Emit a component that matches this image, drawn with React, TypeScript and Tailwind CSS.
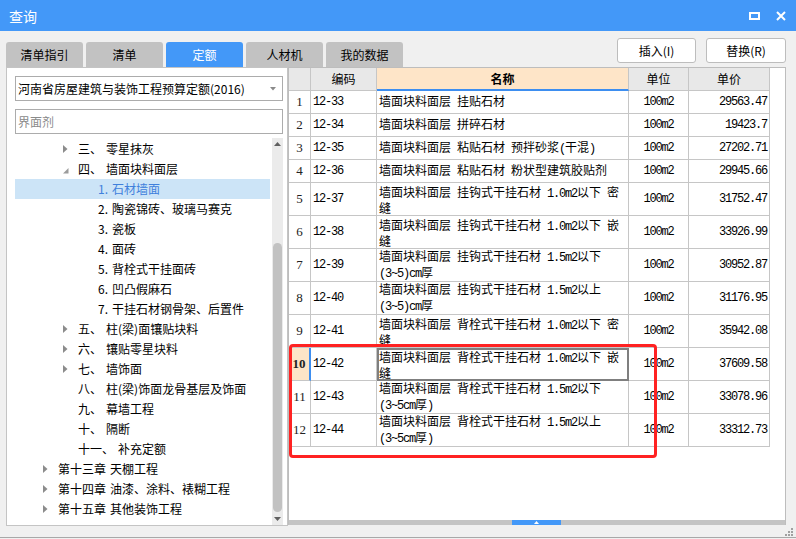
import React from "react";

const ui = "font-['Noto_Sans_CJK_SC','Noto_Sans',sans-serif]";
const mono = "font-['Liberation_Mono','Noto_Sans_CJK_SC',monospace]";
const serif = "font-['Liberation_Serif','Noto_Sans_CJK_SC',serif]";

function Mixed({ text }: { text: string }) {
  const parts = text.split(/([ -~]+)/).filter((p) => p.length > 0);
  return (
    <>
      {parts.map((p, i) =>
        /^[ -~]+$/.test(p) ? (
          <span key={i} className={`${mono} tracking-[-1.2px] whitespace-pre`}>
            {p}
          </span>
        ) : (
          <span key={i}>{p}</span>
        )
      )}
    </>
  );
}

type Row = { n: number; code: string; name: string[]; unit: string; price: string };

const rows: Row[] = [
  { n: 1, code: "12-33", name: ["墙面块料面层 挂贴石材"], unit: "100m2", price: "29563.47" },
  { n: 2, code: "12-34", name: ["墙面块料面层 拼碎石材"], unit: "100m2", price: "19423.7" },
  { n: 3, code: "12-35", name: ["墙面块料面层 粘贴石材 预拌砂浆(干混)"], unit: "100m2", price: "27202.71" },
  { n: 4, code: "12-36", name: ["墙面块料面层 粘贴石材 粉状型建筑胶贴剂"], unit: "100m2", price: "29945.66" },
  { n: 5, code: "12-37", name: ["墙面块料面层 挂钩式干挂石材 1.0m2以下 密", "缝"], unit: "100m2", price: "31752.47" },
  { n: 6, code: "12-38", name: ["墙面块料面层 挂钩式干挂石材 1.0m2以下 嵌", "缝"], unit: "100m2", price: "33926.99" },
  { n: 7, code: "12-39", name: ["墙面块料面层 挂钩式干挂石材 1.5m2以下", "(3~5)cm厚"], unit: "100m2", price: "30952.87" },
  { n: 8, code: "12-40", name: ["墙面块料面层 挂钩式干挂石材 1.5m2以上", "(3~5)cm厚"], unit: "100m2", price: "31176.95" },
  { n: 9, code: "12-41", name: ["墙面块料面层 背栓式干挂石材 1.0m2以下 密", "缝"], unit: "100m2", price: "35942.08" },
  { n: 10, code: "12-42", name: ["墙面块料面层 背栓式干挂石材 1.0m2以下 嵌", "缝"], unit: "100m2", price: "37609.58" },
  { n: 11, code: "12-43", name: ["墙面块料面层 背栓式干挂石材 1.5m2以下", "(3~5cm厚)"], unit: "100m2", price: "33078.96" },
  { n: 12, code: "12-44", name: ["墙面块料面层 背栓式干挂石材 1.5m2以上", "(3~5cm厚)"], unit: "100m2", price: "33312.73" },
];

type TreeItem = { lv: 1 | 2 | 3; a: string; b: string; ic?: "r" | "d"; sel?: boolean };

const tree: TreeItem[] = [
  { lv: 2, a: "三、", b: "零星抹灰", ic: "r" },
  { lv: 2, a: "四、", b: "墙面块料面层", ic: "d" },
  { lv: 3, a: "1.", b: "石材墙面", sel: true },
  { lv: 3, a: "2.", b: "陶瓷锦砖、玻璃马赛克" },
  { lv: 3, a: "3.", b: "瓷板" },
  { lv: 3, a: "4.", b: "面砖" },
  { lv: 3, a: "5.", b: "背栓式干挂面砖" },
  { lv: 3, a: "6.", b: "凹凸假麻石" },
  { lv: 3, a: "7.", b: "干挂石材钢骨架、后置件" },
  { lv: 2, a: "五、", b: "柱(梁)面镶贴块料", ic: "r" },
  { lv: 2, a: "六、", b: "镶贴零星块料", ic: "r" },
  { lv: 2, a: "七、", b: "墙饰面", ic: "r" },
  { lv: 2, a: "八、", b: "柱(梁)饰面龙骨基层及饰面" },
  { lv: 2, a: "九、", b: "幕墙工程" },
  { lv: 2, a: "十、", b: "隔断" },
  { lv: 2, a: "十一、", b: "补充定额" },
  { lv: 1, a: "第十三章", b: "天棚工程", ic: "r" },
  { lv: 1, a: "第十四章", b: "油漆、涂料、裱糊工程", ic: "r" },
  { lv: 1, a: "第十五章", b: "其他装饰工程", ic: "r" },
];

const tabs = ["清单指引", "清单", "定额", "人材机", "我的数据"];

function TreeRow({ it }: { it: TreeItem }) {
  const indent = it.lv === 1 ? "pl-[28px]" : it.lv === 2 ? "pl-[48px]" : "pl-[68px]";
  return (
    <div
      className={`h-[20px] flex items-center ${indent} ${
        it.sel ? "bg-[#cce4f7] text-[#3f80dc]" : "text-black"
      }`}
    >
      <div className="w-[15px] h-[20px] flex items-center shrink-0">
        {it.ic === "r" && (
          <svg width="5" height="8" viewBox="0 0 5 8">
            <polygon points="0,0 4.5,4 0,8" fill="#8c8c8c" />
          </svg>
        )}
        {it.ic === "d" && (
          <svg width="6" height="6" viewBox="0 0 6 6" className="mt-[3px]">
            <polygon points="5.5,0 5.5,5.5 0,5.5" fill="#9c9c9c" />
          </svg>
        )}
      </div>
      <span className="text-[12px] leading-[20px] whitespace-nowrap">{it.a}</span>
      <span className="text-[12px] leading-[20px] whitespace-nowrap ml-[4px]">{it.b}</span>
    </div>
  );
}

function LeftPanel() {
  return (
    <div className="w-[282px] h-[459px] shrink-0 bg-white border border-[#c4c4c4] flex flex-col pt-[8px] pl-[8px] pr-[4px]">
      <div className="h-[25px] shrink-0 border border-[#acacac] flex items-center justify-between pl-[2px] pr-[6px]">
        <span className="text-[12px] leading-none text-black whitespace-nowrap">
          河南省房屋建筑与装饰工程预算定额(2016)
        </span>
        <svg width="6" height="4" viewBox="0 0 6 4">
          <polygon points="0,0 6,0 3,3.5" fill="#8a8a8a" />
        </svg>
      </div>
      <div className="h-[25px] mt-[8px] shrink-0 border border-[#acacac] flex items-center pl-[2px]">
        <span className="text-[12px] leading-none text-[#8a8a8a]">界面剂</span>
      </div>
      <div className="mt-[4px] flex-1 flex min-h-0">
        <div className="flex-1 pt-[1px] pr-[2px] overflow-hidden">
          {tree.map((it, i) => (
            <TreeRow key={i} it={it} />
          ))}
        </div>
        <div className="w-[11px] bg-[#ebebeb] flex flex-col items-center">
          <div className="h-[12px] w-full flex items-center justify-center">
            <svg width="7" height="4" viewBox="0 0 7 4">
              <polygon points="0,4 7,4 3.5,0" fill="#606060" />
            </svg>
          </div>
          <div className="h-[93px]" />
          <div className="h-[269px] w-[9px] rounded-full bg-[#c2c2c2]" />
          <div className="flex-1 w-full flex items-center justify-center">
            <svg width="7" height="4" viewBox="0 0 7 4">
              <polygon points="0,0 7,0 3.5,4" fill="#606060" />
            </svg>
          </div>
        </div>
      </div>
    </div>
  );
}

const line = "border-[#c6c6c6]";

function TablePanel() {
  return (
    <div className="relative w-[498px] h-[458px] shrink-0 bg-white border-l border-r border-t border-[#bdbdbd] flex flex-col">
      <div className="flex h-[23px] shrink-0 text-[12px] text-black">
        <div className={`w-[22px] bg-[#e8e8e8] border-r border-b ${line}`} />
        <div className={`w-[66px] bg-[#e8e8e8] border-r border-b ${line} flex items-center justify-center`}>编码</div>
        <div className={`w-[252px] bg-[#fee5c8] border-r ${line} border-b-2 border-b-[#3d8ef0] flex items-center justify-center font-bold`}>
          名称
        </div>
        <div className={`w-[60px] bg-[#e8e8e8] border-r border-b ${line} flex items-center justify-center`}>单位</div>
        <div className={`w-[81px] bg-[#e8e8e8] border-r border-b ${line} flex items-center justify-center`}>单价</div>
      </div>
      {rows.map((r) => {
        const h = r.name.length > 1 ? "h-[33px]" : "h-[23px]";
        const sel = r.n === 10;
        return (
          <div key={r.n} className={`flex ${h} shrink-0 text-[12px] text-black`}>
            <div
              className={`w-[22px] border-b ${line} flex items-center justify-center ${serif} text-[13px] text-[#222] ${
                sel ? "bg-[#fde4c7] font-bold border-r-2 border-r-[#3d8ef0]" : `border-r`
              }`}
            >
              {r.n}
            </div>
            <div className={`w-[66px] border-r border-b ${line} flex items-center pl-[2px]`}>
              <Mixed text={r.code} />
            </div>
            <div className={`relative w-[252px] border-r border-b ${line} flex flex-col justify-center pl-[2px] leading-[13px]`}>
              {r.name.map((ln, i) => (
                <div key={i} className="whitespace-nowrap">
                  <Mixed text={ln} />
                </div>
              ))}
              {sel && <div className="absolute left-0 top-0 -right-px -bottom-px border-2 border-[#7f7f7f]" />}
            </div>
            <div className={`w-[60px] border-r border-b ${line} flex items-center justify-center`}>
              <Mixed text={r.unit} />
            </div>
            <div className={`w-[81px] border-r border-b ${line} flex items-center justify-end pr-[2px]`}>
              <Mixed text={r.price} />
            </div>
          </div>
        );
      })}
      <div className="flex-1" />
      <div className="h-[5px] shrink-0 bg-[#c4c4c4] flex">
        <div className="w-[223px]" />
        <div className="w-[49px] bg-[#4398f8] flex items-center justify-center">
          <svg width="5" height="3" viewBox="0 0 5 3">
            <polygon points="0,3 5,3 2.5,0" fill="#fff" />
          </svg>
        </div>
      </div>
      <div className="absolute left-0 top-[276px] w-[368px] h-[114px] border-[3px] border-[#ff2222] rounded-[4px] pointer-events-none" />
    </div>
  );
}

export default function App() {
  return (
    <div className={`w-[796px] h-[539px] bg-[#f0f0f0] flex flex-col overflow-hidden ${ui} text-[12px] text-black`}>
      <div className="h-[31px] shrink-0 bg-[#4398f8] flex items-center justify-between pl-[9px] pr-[10px]">
        <span className="text-white text-[14px] leading-none">查询</span>
        <div className="flex items-center gap-[16px]">
          <svg width="11" height="8" viewBox="0 0 11 8">
            <rect x="1" y="1" width="9" height="6" fill="none" stroke="#fff" strokeWidth="2" />
          </svg>
          <svg width="10" height="10" viewBox="0 0 10 10">
            <path d="M1 1L9 9M9 1L1 9" stroke="#fff" strokeWidth="2" />
          </svg>
        </div>
      </div>
      <div className="h-[36px] shrink-0 flex justify-between pl-[6px] pr-[10px]">
        <div className="flex items-end gap-[3px]">
          {tabs.map((t) => (
            <div
              key={t}
              className={`w-[77px] h-[25px] rounded-t-[3px] flex items-center justify-center text-[12px] ${
                t === "定额" ? "bg-[#4398f8] text-white" : "bg-[#c2c2c2] text-black"
              }`}
            >
              {t}
            </div>
          ))}
        </div>
        <div className="flex items-start gap-[10px] pt-[7px]">
          <button className="w-[79px] h-[25px] bg-white border border-[#bdbdbd] rounded-[3px] text-[12px] text-black">
            插入(I)
          </button>
          <button className="w-[80px] h-[25px] bg-white border border-[#bdbdbd] rounded-[3px] text-[12px] text-black">
            替换(R)
          </button>
        </div>
      </div>
      <div className="h-[459px] shrink-0 flex items-start pl-[6px]">
        <LeftPanel />
        <TablePanel />
      </div>
      <div className="h-[12px] shrink-0 border-b border-[#a8a8a8] flex justify-end items-start pr-[3px] pt-[1px]">
        <svg width="9" height="9" viewBox="0 0 9 9">
          <rect x="7" y="1" width="2" height="2" fill="#a0a0a0" />
          <rect x="4" y="4" width="2" height="2" fill="#a0a0a0" />
          <rect x="7" y="4" width="2" height="2" fill="#a0a0a0" />
          <rect x="1" y="7" width="2" height="2" fill="#a0a0a0" />
          <rect x="4" y="7" width="2" height="2" fill="#a0a0a0" />
          <rect x="7" y="7" width="2" height="2" fill="#a0a0a0" />
        </svg>
      </div>
    </div>
  );
}
